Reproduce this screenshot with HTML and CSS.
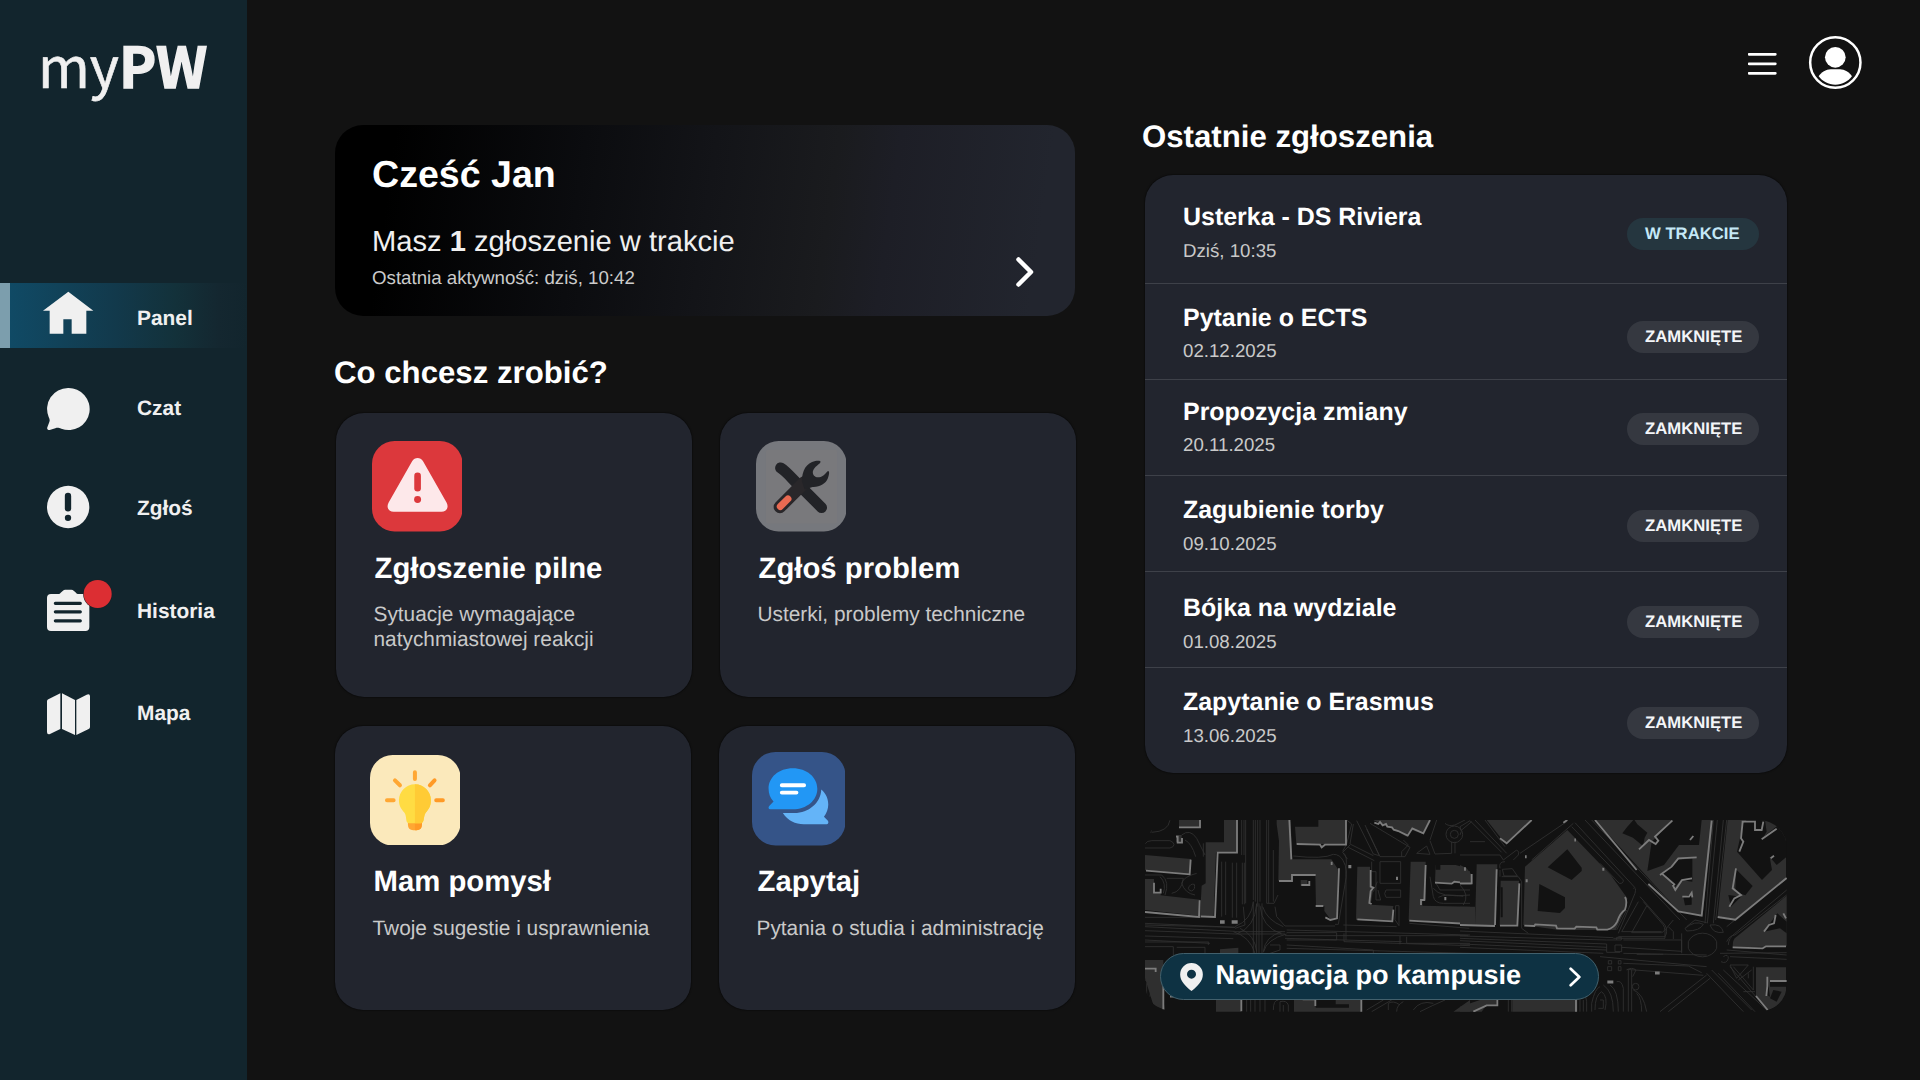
FILE: index.html
```html
<!DOCTYPE html>
<html lang="pl">
<head>
<meta charset="utf-8">
<title>myPW</title>
<link rel="stylesheet" href="styles.css">
</head>
<body>
<div class="app">
  <aside class="sidebar">
    <div class="logo">my<b>PW</b></div>
    <nav class="nav">
      <a class="nav-item nav-item--active">
        <svg class="nav-icon" viewBox="120 847.5 240 196.5"><path fill="#f0f0f0" d="M205 874l75 57h-21v69h-44v-44h-25v44h-41v-69h-20z"/></svg>
        <span>Panel</span>
      </a>
      <a class="nav-item nav-item--chat">
        <svg class="nav-icon" viewBox="120 15 240 198"><path fill="#f0f0f0" d="M204 54a63 63 0 1 1-20 122c-9-3-12-3-18-1l-17 5c-5 1-9-3-7-8l6-16c2-6 1-9-2-15A63 63 0 0 1 204 54z"/></svg>
        <span>Czat</span>
      </a>
      <a class="nav-item nav-item--report">
        <svg class="nav-icon" viewBox="120 316 240 198"><circle cx="204.500" cy="412" r="63.500" fill="#f0f0f0"/><path d="M204 379v37" stroke="#12252d" stroke-width="19" stroke-linecap="round"/><circle cx="204" cy="444.500" r="9.500" fill="#12252d"/></svg>
        <span>Zgłoś</span>
      </a>
      <a class="nav-item nav-item--history">
        <svg class="nav-icon" viewBox="120 624 240 198"><path fill="#f0f0f0" d="M153 672h23q4 0 6-4l6-5q4-4 8-4h18q4 0 8 4l6 5q2 4 6 4h22q12 0 12 12v87q0 12-12 12H153q-12 0-12-12v-87q0-12 12-12z"/><path d="M166 700h75M166 725.500h75M166 752.500h75" stroke="#12252d" stroke-width="9.500" stroke-linecap="round"/><circle cx="293" cy="672" r="43.500" fill="#1c2227"/><circle cx="293" cy="672" r="42" fill="#dc2e33"/></svg>
        <span>Historia</span>
      </a>
      <a class="nav-item nav-item--map">
        <svg class="nav-icon" viewBox="120 929 240 198"><path fill="#f0f0f0" d="M141 993q0-4 4-6l36-18v107l-31 15q-9 3-9-6zM186 969l39 20v105l-39-18zM229 989l31-16q10-4 10 5v92q0 4-4 6l-37 18z"/></svg>
        <span>Mapa</span>
      </a>
    </nav>
  </aside>

  <main class="main">
    <header class="topbar">
      <svg class="topbar-icons" viewBox="54 32 342 160">
        <path d="M57 87h79M57 115.500h79M57 144h79" stroke="#fff" stroke-width="8" stroke-linecap="round"/>
        <circle cx="316" cy="111.500" r="75.500" fill="none" stroke="#fff" stroke-width="7.500"/>
        <circle cx="316" cy="96" r="31" fill="#fff"/>
        <path fill="#fff" d="M266 153c8-12 22-21 36-21h28c14 0 28 9 36 21-11 15-29 25-50 25s-39-10-50-25z"/>
      </svg>
    </header>

    <div class="columns">
      <section class="left">
        <article class="hero">
          <div>
            <h1 class="hero-title">Cześć Jan</h1>
            <p class="hero-text">Masz <b>1</b> zgłoszenie w trakcie</p>
            <p class="hero-note">Ostatnia aktywność: dziś, 10:42</p>
          </div>
          <svg class="hero-arrow" viewBox="0 0 20 32"><path d="M3.500 3.500L16 16 3.500 28.500" fill="none" stroke="#fff" stroke-width="4.500" stroke-linecap="round" stroke-linejoin="round"/></svg>
        </article>

        <h2 class="heading">Co chcesz zrobić?</h2>

        <div class="cards">
          <article class="card">
            <svg class="tile" viewBox="0 0 272 272"><rect width="272" height="272" rx="68" fill="#dc383c"/><path fill="#fde8ea" d="M121 60c7-12 25-12 32 0l71 125c8 14 0 28-15 28H65c-15 0-23-14-15-28z"/><path d="M137 105v37" stroke="#dc383c" stroke-width="20" stroke-linecap="round"/><circle cx="137" cy="176" r="10.500" fill="#dc383c"/></svg>
            <h3 class="card-title">Zgłoszenie pilne</h3>
            <p class="card-text">Sytuacje wymagające<br>natychmiastowej reakcji</p>
          </article>
          <article class="card">
            <svg class="tile" viewBox="76 64 272 272">
              <rect x="76" y="64" width="272" height="272" rx="68" fill="#76787d"/>
              <rect x="106" y="90" width="214" height="222" rx="6" fill="#79797c"/>
              <path d="M150 145C172 159 190 185 213 204L273 264" fill="none" stroke="#222327" stroke-width="33" stroke-linecap="round"/>
              <path d="M148 262L222 188" stroke="#29272a" stroke-width="38" stroke-linecap="round"/>
              <path fill="#222327" d="M214 186c0-34 13-56 40-62 9-2 17-1 16 3-1 6-20 14-23 28-2 12 8 20 19 18 13-2 21-14 26-19 6-1 4 12 0 22-7 17-24 27-46 26l-24 8z"/>
              <path d="M149 261L172 238" stroke="#e96a52" stroke-width="21" stroke-linecap="round"/>
            </svg>
            <h3 class="card-title">Zgłoś problem</h3>
            <p class="card-text">Usterki, problemy techniczne</p>
          </article>
          <article class="card card--low">
            <svg class="tile" viewBox="30 29 272 272">
              <rect x="30" y="29" width="272" height="272" rx="68" fill="#fbe9bb"/>
              <g stroke="#ffa733" stroke-width="12" stroke-linecap="round"><path d="M81 165h20M105 105l15 15M165 81v20"/><path stroke="#ff9a26" d="M229 165h20M224 105l-14 15"/></g>
              <path fill="#ffa733" d="M144 228h42v11q0 16-16 16h-10q-16 0-16-16z"/><path fill="#ff9a26" d="M165 228h21v11q0 16-16 16h-5z"/>
              <path fill="#ffdc43" d="M165 117a48 48 0 0 1 48 48c0 20-8 28-15 37-9 12-3 32-15 32h-36c-12 0-5-20-14-32-7-9-16-17-16-37a48 48 0 0 1 48-48z"/>
              <path fill="#ffcb35" d="M165 117a48 48 0 0 1 48 48c0 20-8 28-15 37-9 12-3 32-15 32h-18z"/>
            </svg>
            <h3 class="card-title">Mam pomysł</h3>
            <p class="card-text">Twoje sugestie i usprawnienia</p>
          </article>
          <article class="card card--ask">
            <svg class="tile tile--ask" viewBox="1174 22 282 282">
              <rect x="1174" y="22" width="282" height="282" rx="71" fill="#355488"/>
              <path fill="#64b4f8" d="M1383 135c14 12 21 28 21 45 0 14-5 26-13 37l12 12c3 4 1 11-4 11h-69c-25 0-48-11-63-34h35c43 0 79-30 81-71z"/>
              <path fill="#2297f5" d="M1297 71c42 0 74 27 74 62s-32 62-74 62h-68c-5 0-7-6-3-10l13-14c-10-10-15-23-15-38 0-35 31-62 73-62z"/>
              <path d="M1264 122.500h67M1264 144.500h44" stroke="#fff" stroke-width="12" stroke-linecap="round"/>
            </svg>
            <h3 class="card-title">Zapytaj</h3>
            <p class="card-text">Pytania o studia i administrację</p>
          </article>
        </div>
      </section>

      <section class="right">
        <h2 class="heading heading--recent">Ostatnie zgłoszenia</h2>
        <ul class="reports">
          <li class="report"><div><h4 class="report-title">Usterka - DS Riviera</h4><p class="report-date">Dziś, 10:35</p></div><span class="status status--open">W TRAKCIE</span></li>
          <li class="report"><div><h4 class="report-title">Pytanie o ECTS</h4><p class="report-date">02.12.2025</p></div><span class="status">ZAMKNIĘTE</span></li>
          <li class="report"><div><h4 class="report-title">Propozycja zmiany</h4><p class="report-date">20.11.2025</p></div><span class="status">ZAMKNIĘTE</span></li>
          <li class="report"><div><h4 class="report-title">Zagubienie torby</h4><p class="report-date">09.10.2025</p></div><span class="status">ZAMKNIĘTE</span></li>
          <li class="report"><div><h4 class="report-title">Bójka na wydziale</h4><p class="report-date">01.08.2025</p></div><span class="status">ZAMKNIĘTE</span></li>
          <li class="report"><div><h4 class="report-title">Zapytanie o Erasmus</h4><p class="report-date">13.06.2025</p></div><span class="status">ZAMKNIĘTE</span></li>
        </ul>

        <div class="campus">
          <svg class="campus-map" viewBox="0 0 642 192">
            <!-- west half of the campus -->
            <g transform="translate(-5 -10) scale(.33333)">
              <g class="roads">
                <path d="M30 40q10 15 2 28M90 30q-5 35-55 37M15 102q5-10 20-10h55q12 5 12 12t-12 10H15M125 75q25-20 45 10l25 50M135 90q20 10 32 50M190 100v40M15 195h50q25 20 10 60M80 205h50q-5 40-35 45M60 200q20 20 10 50M170 190q-40 10-45 30 10 30 40 35M145 235q5-15 18-12 4 15-8 20-8 0-10-8M245 155v165M257 155v160M277 158v165M290 158v165M305 30v105M312 30v105M317 30v250M307 158v125M313 158v125M340 30v240M346 30v245M353 30v260M360 30v245M380 30v250M386 30v250M400 120v155M380 280h22l12-25M285 350q50-20 55-75M290 372q55-20 60-90M430 350q-50-20-62-60M425 372q-60-20-65-85M340 275v165M350 280v155M357 280v150M366 280v155M280 365q50 15 65 65M300 355q45 20 50 70M425 365q-50 15-55 60M440 372q-60 15-70 55M285 365h150M285 372h150M310 290l5 55-30 10M405 290l5 30 25 28h150M15 322h210M15 345l270 7M15 340l270 12M15 350l270 14M15 362l270 10M15 378l265 8M15 390l195 10M205 395v10M15 396h190M15 410l85 0v25M110 412h85v20M440 360l550 15M440 368h150v22H440M435 377h550M435 385l350 10M612 370v25l378 12M440 405l260 15M440 415l550 15M700 420v10M780 378v25M800 380v20h190M390 405h30v15l-30 10"/>
                <path d="M460 138q90 10 120-5 20 0 30 20 15 25 5 70l-20 120h-10M612 130q10 10 6 40v220M620 30l15 12-15 60-12 22M650 32l50 100 18 5-38-80M640 42l-10 60 70 35M630 105l-22 22 14 20M625 112l78 40M675 45l45 95h75l15-28-120-72M720 155h62v65h-62zM738 240h44v22h-44q-8-11 0-22M695 155v30h13v85h14l-8-30M700 245l12-30M767 287h10v60l-12-18zM610 345l160 5M808 340l180 15M785 140v-15l20-20-15-15M830 130l30-22 10 25zM870 90l20-60M870 92l15 40 50-2v-35M945 130v-35M990 95h45M918 73a25 25 0 1 0 50 0 25 25 0 1 0-50 0M931 73a12 12 0 1 0 24 0 12 12 0 1 0-24 0M915 40q10 10 30 5l30-15M870 200l10 60q5 20 30 20h80M880 235q20 30 110 20M885 215l15 25h90M895 262q20-12 75-3"/>
                <path d="M15 480q25 0 25 20-15 15-25 10M15 500q25 5 15 60M20 520v75M40 500v90M320 570v35M332 570v35M345 570v35M360 570v35M375 570v35M400 600q0-30 15-30M420 605v-30q20-5 25 10v20M430 605v-20M680 600l50-30M695 605l60-35M745 600v-20q15-10 35 5M770 605q0-20 20-30M820 600q20-30 60-20M840 605q40-20 75-35"/>
              </g>
              <g class="blocks">
                <path d="M117 30h64v22h-64zM108 75h17v22h-17zM15 135l138 12-5 46-133-12zM15 207h27v42h20v7l118 13-4 48-161-17zM252 30h40v97h-64l-7 195-41-5 5-90 12-7V97h55zM410 30h42l5 118h117l20 30-5 145-18 5-18-25v-15h-25l-2-93-68 3v15h-43l2-120-7-50zM482 210h20v18h-20zM465 50h70V30h84v73l-150-2zM700 30h170l-20 42-35-12-15 20-40-22-45-20zM652 170h38v60l10 4-8 50 68 4-5 47-107-5zM812 155h45v115h-10v17l143 3v50l-184-10zM887 165h60l43 12v45l-105-6z"/>
                <path d="M240 418l55-5v18h-55zM15 450h55v120l5 30-35-15-25-80zM228 568h75v37h-75zM462 568h202v37H462zM940 605l50-35v35z"/>
              </g>
              <path class="gaps" d="M887 165h14v14h-14zM976 170h14v14h-14zM527 568h60v15h40v10h-100z"/>
              <g class="edges">
                <path d="M117 52h63V30M108 80h5v18h13v-14M18 182l131 11 3-44M42 218v30h20v-12M15 306l162 15 2-50M182 319l43 2 8-193h58V30M448 30l6 118M417 213h39v-18h71M527 288h23M597 175l-6 150-20 5-15-8M575 155v10M484 225h24v-12M470 102l70 2 5 8 10-8h63V30M703 38l12 4 5-6 8 10 10-4 4 8 14 2 5 7 14 4 28 14 14-22 33 15 20-40M692 180v50l8 3-8 10-4 36 7 3M652 328l105 6 3-35M857 165l-4 105h-10v15M808 332l182 10M885 218l50 3 8-6 47 6M15 476h32v10M70 480v118M304 568v36M664 570v35M488 568h38v20M90 560h20"/>
                <path stroke-width="10" d="M240 336h14M275 336h18M625 170h9M768 205h6M913 266h6"/>
              </g>
            </g>
            <!-- east half of the campus -->
            <g transform="translate(315 -10) scale(.33333)">
              <g class="roads">
                <path d="M0 135h120l10 15M0 75q8-10 0-25M0 50l30-18 95 95M45 30l95 100M75 30l60 80M5 60l30-25M130 150l40-30q10 5 5 15l-15 15M180 130l140-95M215 150l125-110M120 175q-5-20 15-20M127 178l30-2 15 22h-40zM120 180v20M125 200h50l10 15v140l20 15M0 225q30 30 10 60M345 38l180 195M335 50l155 160q0 12-12 10L420 160M375 30l285 300M395 30l285 300M520 235q10-5 5 15l-50 120M540 260l75 85q10 20 0 35H475M550 275l60 70q10 18-5 23h-90l45-80M500 300l-30 60M535 275l-50 90h120M640 330l-25 30v25H460M625 350l15 15v22M0 363l460 20M0 385l440 17v25h40M0 392l440 20M0 402l440 18M0 378l440 12h30v-8h14v8h-14M0 412l430 18M465 405h20v20h-20zM490 390h175v40M665 370v55M485 412l180 12M490 430l250 5M530 433h80M420 440l320 30M490 460l195 8 40 20M500 478l230 18M445 452h10v10h-10zM475 452h8v10h-8zM443 470h12v12h-12zM475 470h8v12h-8zM760 30l-25 310M772 30l-30 310M790 30l-30 310M800 30l-33 300M680 350l25-20 35 8M675 355q30-25 55-12-10 20-50 20zM750 345q35-5 40 22-30 5-40-22M685 395a45 38 0 0 1 85 0v20a45 38 0 0 1-85 0zM800 395q10-20 25-20l155-120M805 405q0-20 20-35l155-130M800 350l180-145M780 430l200-2M800 420l180 15M810 440l170 8M790 440q15-10 15 5-5 18-22 10M740 490l110 115M755 480l120 120M775 490l110 115M790 480l130 120M740 495L600 605M750 505L625 605M810 465h55l-35 40zM820 470l60 70v-70M835 510l40-30M865 505v-15M850 545h35M810 470l95 110"/>
                <path d="M380 605v-30q0-15-12-30M395 605v-25q10-45 25-50M405 600q0-45 20-55 20 15 10 55M420 570h10v25h-15M460 605q0-60-30-80M475 605q0-65-25-80M490 605v-70q-5-25-20-20M505 480v125M515 480v125M500 480q15-10 28 0l-10 20M517 530a10 10 0 1 0 20 0 10 10 0 1 0-20 0M520 540q30 10 40 65M530 550q15 15 15 55M145 570v35M155 570v35M360 570v35M370 570v35"/>
              </g>
              <g class="blocks">
                <path d="M80 30h135l-75 70-20-20zM50 163h62l-5 182H45zM122 212h55l-3 135h-55zM0 165l20 10 15 20v30H0zM0 290h45v55H0zM322 60l130 135 50 70-5 30-30 65h-170l-107-15 5-175zM405 30h355l-32 287-73-15zM803 30h175v175L825 328l-52-10zM818 412q0-25 10-30l152-125v152zM888 472h90v80q-10 35-55 48l-35-40zM157 568h195v37H157zM0 590l60-20h50v15H80l-15 20H0z"/>
              </g>
              <path class="gaps" d="M322 118l43 55v10l-30 27-72-38zM238 222l77 40v32l-15 15-67-6zM487 70l15-20 20-22 10 15 30 25-8 15-5 25-30-25zM575 95l65-65h85l-8 75-60 0-45 60-50 18zM605 190l50-40 42-5v70l-35-5-20 25-15-30zM670 262l25-10v32l-20 2zM850 40l10-10h55l5 35-12 20 20 50 8 45-30 30-75-85zM905 85l50-40 25 15v80l-30 25-30-35zM828 178l50 50-22 28-30-10zM805 255l38 5-30 30zM912 365l40-55 28 25v35l-20-15zM930 515h50v15h-50zM922 500l8 60-10-5zM940 540l25 5-15 30-20-10zM122 232h6v90h-6z"/>
              <g class="edges">
                <path d="M120 85l20 15 75-70M110 178l-5 167M178 220l-6 127H120M15 172v10M35 192v28H0M0 345l105 3M193 347l30 1 3-5 62 4 3 8 53 1 5-6 60 2 3 7h30q20-5 30-25 8-25 23-35 8-25 0-38M310 38l12-8M405 30l125 150M565 222l90 82 70 13 30-285M537 118l30-28 20 12 8-10-10-12 52-48M600 195l35-25 20-25 55-3M605 190l40 35M638 225l8 15 20-30 30-5M667 260h20l8-12 2 14M690 90l10-12M773 321l53 8 154-125M848 35l-5 50 7 10-12 30M845 35h40v25h20l5-25M905 88l45-32M932 145l10-8M828 175l-10 60 25 20-20 10-15 25M818 412l90 3 10-6h60M912 365l15-20 15-5 5-25M970 310l8 15M922 500v28l-3 30M930 513h50M888 558l35 42M348 568v37M112 568v18H80l-40 19"/>
                <path stroke-width="9" d="M427 178h6M197 212h6M195 140h5M585 489h14M442 516h18M343 90h5"/>
              </g>
            </g>
          </svg>
          <a class="navigate">
            <svg class="pin" viewBox="0 0 68 84"><path fill="#f0f0f0" fill-rule="evenodd" d="M34 0a34 34 0 0 1 34 35c0 18-15 34-34 49C15 69 0 53 0 35A34 34 0 0 1 34 0zm0 20a13.500 13.500 0 1 0 0 27 13.500 13.500 0 0 0 0-27z"/></svg>
            <span>Nawigacja po kampusie</span>
            <svg class="navigate-arrow" viewBox="0 0 36 60"><path d="M5 5l26 25L5 55" fill="none" stroke="#fff" stroke-width="8" stroke-linecap="round" stroke-linejoin="round"/></svg>
          </a>
        </div>
      </section>
    </div>
  </main>
</div>
</body>
</html>
```
FILE: styles.css
```css
* { box-sizing: border-box; margin: 0; padding: 0; }

body {
  background: #121212;
  color: #fff;
  font-family: "Liberation Sans", Arial, sans-serif;
  text-rendering: geometricPrecision;
}

svg { display: block; flex: none; }

.app {
  display: flex;
  width: 1920px;
  height: 1080px;
  overflow: hidden;
}

/* Sidebar */
.sidebar {
  flex: none;
  width: 247px;
  height: 1080px;
  background: #12252d;
  color: #f0f0f0;
}

.logo {
  height: 282.5px;
  padding: 23px 0 0 38px;
  font: 400 56px/84px "Noto Sans CJK SC", "Noto Sans", sans-serif;
  white-space: nowrap;
  -webkit-text-stroke: 0.6px #f0f0f0;
}

.logo b { font-weight: 700; letter-spacing: -0.5px; -webkit-text-stroke-width: 1.4px; }

.nav-item {
  display: flex;
  align-items: center;
  height: 66px;
  padding-left: 40px;
  gap: 17px;
  font-size: 20.900px;
  font-weight: 700;
  line-height: 24px;
}

.nav-item span { padding-top: 2px; }
.nav-icon { width: 80px; height: 66px; }

.nav-item--active {
  height: 65.500px;
  padding-left: 30px;
  border-left: 10px solid #7c9ead;
  background: linear-gradient(90deg, #104a65 0%, #12394b 45%, #13313a 70%, #142730 88%, #12252d 100%);
}

.nav-item--active .nav-icon { height: 65.500px; }
.nav-item--active span { padding-top: 7px; }
.nav-item--chat { margin-top: 27px; }
.nav-item--report { margin-top: 34.400px; }
.nav-item--history { margin-top: 36.600px; }
.nav-item--map { margin-top: 35.700px; }

/* Main area */
.main { flex: 1; }

.topbar {
  display: flex;
  justify-content: flex-end;
  height: 117px;
  padding: 35.500px 58px 0 0;
}

.topbar-icons { width: 114px; height: 53.300px; }

.columns {
  display: flex;
  gap: 70px;
  padding-left: 88px;
}

.left { width: 740px; padding-top: 7.500px; }
.right { width: 641.500px; }

.hero {
  display: flex;
  justify-content: space-between;
  height: 191.500px;
  padding: 27.500px 40.500px 0 37px;
  border-radius: 28px;
  background: linear-gradient(98deg, #000 8%, #0b0c0f 33%, #131418 50%, #1a1b1e 66%, #1d1e26 74%, #22252e 94%);
}

.hero-title { font-size: 37.600px; line-height: 44px; }

.hero-text {
  margin-top: 26px;
  color: #f0f0f0;
  font-size: 29.150px;
  line-height: 40px;
}

.hero-note {
  margin-top: 1px;
  color: #ccc;
  font-size: 18.700px;
  line-height: 30px;
}

.hero-arrow { width: 20px; height: 32px; margin-top: 104px; }

.heading { font-size: 31.200px; line-height: 36px; }
.left .heading { margin: 39px 0 0 -1px; }
.heading--recent { margin: 2px 0 0 -3px; }

.cards {
  display: grid;
  grid-template-columns: 356px 356px;
  grid-auto-rows: 284px;
  gap: 29.500px 28px;
  margin: 21.500px 0 0 1px;
}

.card {
  padding: 28.500px 0 0 35.500px;
  border-radius: 28px;
  background: #22252e;
  box-shadow: 0 0 2px #000;
}

.tile { width: 90.500px; height: 90.500px; }
.card-title { margin: 20px 0 0 3px; font-size: 29.300px; line-height: 34px; }
.card-text { margin: 16.500px 0 0 2px; color: #c9c9c9; font-size: 20.850px; line-height: 25px; }
.card--low, .card--ask { position: relative; left: -1px; }
.card--low .tile { margin-left: -1px; }
.card--ask { padding-top: 26px; }
.tile--ask { width: 93.500px; height: 93.500px; margin-left: -3px; }
.card--ask .card-title { margin-top: 19.500px; }

/* Recent reports */
.reports {
  height: 598px;
  margin-top: 20px;
  border-radius: 28px;
  background: #22252e;
  box-shadow: 0 0 2px #000;
  list-style: none;
}

.report {
  display: flex;
  justify-content: space-between;
  height: 96px;
  padding: 19px 27.500px 0 38px;
  border-bottom: 1.330px solid #3e4149;
}

.report:first-child { height: 108.500px; padding-top: 27px; }
.report:nth-child(3) { padding-top: 17px; }
.report:nth-child(4) { padding-top: 19.500px; }
.report:nth-child(5) { padding-top: 21.500px; }
.report:last-child { padding-top: 19.500px; border: 0; }

.report-title { font-size: 24.950px; line-height: 30px; }
.report-date { margin-top: 1.500px; color: #c9c9c9; font-size: 18.700px; line-height: 34px; }

.status {
  width: 132px;
  height: 32px;
  margin-top: 18.500px;
  padding-left: 18px;
  border-radius: 16px;
  background: #353840;
  color: #f3f5f8;
  font-size: 16.700px;
  font-weight: 700;
  line-height: 32px;
}

.status--open { margin-top: 15.500px; background: #25363f; color: #c4e8f6; }
.report:nth-child(3) .status { margin-top: 16.500px; }
.report:nth-child(4) .status { margin-top: 15px; }
.report:nth-child(5) .status { margin-top: 13px; }
.report:last-child .status { margin-top: 19.500px; }

/* Campus map */
.campus {
  position: relative;
  height: 192px;
  margin-top: 47px;
  border-radius: 28px;
  overflow: hidden;
}

.campus-map { width: 642px; height: 192px; }
.roads { fill: none; stroke: #333; stroke-width: 2.500px; }
.blocks { fill: #2f2f2f; }
.gaps { fill: #121212; }
.edges { fill: none; stroke: #7c7c7c; stroke-width: 5.500px; }

.navigate {
  position: absolute;
  left: 15px;
  top: 133px;
  display: flex;
  align-items: center;
  width: 439px;
  height: 47px;
  padding: 0 17px 0 19px;
  border: 1px solid #42606c;
  border-radius: 24px;
  background: #0e3243;
  font-size: 27.100px;
  font-weight: 700;
  line-height: 30px;
}

.navigate span { margin: -3px auto 0 12.500px; }
.pin { width: 23px; height: 28px; }
.navigate-arrow { width: 12px; height: 20px; }
```
